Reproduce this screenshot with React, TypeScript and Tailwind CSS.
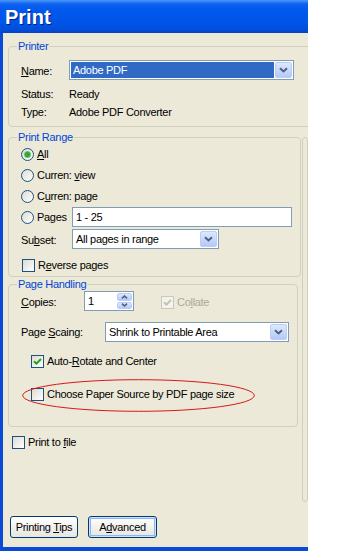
import type { ReactNode } from "react";

// XP-style "Print" dialog, cropped at the right edge like the screenshot.

function U({ children }: { children: ReactNode }) {
  return <span className="underline decoration-1 underline-offset-[1px]">{children}</span>;
}

function Group({ label, className = "", children }: { label: string; className?: string; children: ReactNode }) {
  return (
    <fieldset className={`rounded-[4px] border border-[#D0D0BF] px-[8px] ${className}`}>
      <legend className="px-[1px] leading-[13px] text-[#0046D5]">{label}</legend>
      <div className="pl-[4px]">{children}</div>
    </fieldset>
  );
}

function DropBtn() {
  return (
    <div className="flex w-[17px] items-center justify-center rounded-[2px] border border-[#BBCDF6] bg-linear-to-b from-[#DDE8FE] to-[#B5C9F6]">
      <svg width="9" height="6" viewBox="0 0 9 6">
        <path d="M1 1.2 L4.5 4.5 L8 1.2" fill="none" stroke="#4D6185" strokeWidth="2" />
      </svg>
    </div>
  );
}

function Combo({ value, w, selected = false }: { value: string; w: string; selected?: boolean }) {
  return (
    <div className={`flex h-[20px] ${w} border border-[#7F9DB9] bg-white p-[1px]`}>
      <div className={`mr-[1px] flex flex-1 items-center pl-[2px] ${selected ? "bg-[#316AC5] text-white" : ""}`}>
        {value}
      </div>
      <DropBtn />
    </div>
  );
}

function Radio({ on = false }: { on?: boolean }) {
  return (
    <span className="flex h-[13px] w-[13px] shrink-0 items-center justify-center rounded-full border border-[#1C5180] bg-linear-to-br from-[#DCDBD3] to-white">
      {on && <span className="h-[5px] w-[5px] rounded-full bg-[#2FA62F] shadow-[0_0_0_1px_#6BC56B]" />}
    </span>
  );
}

function Check({ on = false, disabled = false }: { on?: boolean; disabled?: boolean }) {
  return (
    <span
      className={`flex h-[13px] w-[13px] shrink-0 items-center justify-center border ${
        disabled ? "border-[#CAC8BB] bg-[#F4F3EE]" : "border-[#1C5180] bg-linear-to-br from-[#DCDBD3] to-white"
      }`}
    >
      {on && (
        <svg width="9" height="9" viewBox="0 0 9 9">
          <path d="M1 4.2 L3.4 6.6 L8 2" fill="none" stroke={disabled ? "#C5C2B2" : "#21A121"} strokeWidth="2" />
        </svg>
      )}
    </span>
  );
}

function Button({ children, main = false, w }: { children: ReactNode; main?: boolean; w: string }) {
  return (
    <div
      className={`flex h-[22px] ${w} items-center justify-center rounded-[3px] border border-[#003C74] bg-linear-to-b from-white to-[#E6E5DE] ${
        main ? "shadow-[inset_0_0_0_1px_#CEE0FB,inset_0_0_0_2px_#91B3EC]" : ""
      }`}
    >
      <span>{children}</span>
    </div>
  );
}

export default function App() {
  return (
    <div className="h-[551px] w-[344px] bg-white font-['Liberation_Sans',Arial,sans-serif] text-[11px] leading-[13px] tracking-[-0.3px] text-black">
      <div className="flex h-[551px] w-[308px] flex-col overflow-hidden">
        {/* title bar */}
        <div className="h-[33px] bg-[linear-gradient(180deg,#4A98FA_0%,#0E62EE_12%,#0058EE_30%,#0055E8_65%,#004FDC_90%,#0A3FBE_100%)] pl-[5px] pt-[2px]">
          <span className="text-[20px] font-bold leading-[31px] tracking-normal text-white [text-shadow:1px_1px_#0A1F80]">
            Print
          </span>
        </div>

        <div className="flex flex-1 flex-col border-b-[4px] border-l-[3px] border-[#0B4AD6] bg-[#ECE9D8] pl-[5px] pt-[7px]">
          {/* Printer */}
          <Group label="Printer" className="w-[310px] pb-[5px]">
            <div className="pt-[7px]">
              <div className="flex h-[20px] items-center">
                <span className="w-[48px] pt-[3px]">
                  <U>N</U>ame:
                </span>
                <Combo value="Adobe PDF" w="w-[225px]" selected />
              </div>
              <div className="mt-[5px] flex h-[18px] items-center">
                <span className="w-[48px]">Status:</span>
                <span>Ready</span>
              </div>
              <div className="flex h-[18px] items-center">
                <span className="w-[48px]">Type:</span>
                <span>Adobe PDF Converter</span>
              </div>
            </div>
          </Group>

          <div className="mt-[4px] flex">
            <div className="flex w-[285px] flex-col">
              {/* Print Range */}
              <Group label="Print Range" className="pb-[3px]">
                <div className="flex h-[20px] items-center gap-[3px]">
                  <Radio on />
                  <span>
                    <U>A</U>ll
                  </span>
                </div>
                <div className="flex h-[22px] items-center gap-[3px]">
                  <Radio />
                  <span>
                    Curren: <U>v</U>iew
                  </span>
                </div>
                <div className="flex h-[20px] items-center gap-[3px]">
                  <Radio />
                  <span>
                    C<U>u</U>rren: page
                  </span>
                </div>
                <div className="mt-[1px] flex h-[20px] items-center">
                  <div className="flex w-[51px] items-center gap-[3px]">
                    <Radio />
                    <span>
                      Pa<U>g</U>es
                    </span>
                  </div>
                  <div className="flex h-[20px] w-[220px] items-center border border-[#7F9DB9] bg-white pl-[3px]">
                    1 - 25
                  </div>
                </div>
                <div className="mt-[2px] flex h-[20px] items-center">
                  <span className="w-[51px] pt-[3px]">
                    Su<U>b</U>set:
                  </span>
                  <Combo value="All pages in range" w="w-[147px]" />
                </div>
                <div className="mt-[9px] flex h-[15px] items-center gap-[3px] pl-[1px]">
                  <Check />
                  <span>
                    R<U>e</U>verse pages
                  </span>
                </div>
              </Group>

              {/* Page Handling */}
              <Group label="Page Handling" className="mt-[1px] pb-[24px]">
                <div className="flex h-[20px] items-center">
                  <span className="w-[63px] pt-[2px]">
                    <U>C</U>opies:
                  </span>
                  <div className="flex h-[20px] w-[50px] border border-[#7F9DB9] bg-white p-[1px]">
                    <span className="flex flex-1 items-center pl-[2px]">1</span>
                    <div className="flex w-[15px] flex-col gap-[1px]">
                      <div className="flex flex-1 items-center justify-center rounded-[2px] border border-[#BBCDF6] bg-linear-to-b from-[#DDE8FE] to-[#B5C9F6]">
                        <svg width="7" height="4" viewBox="0 0 7 4">
                          <path d="M1 3.4 L3.5 1 L6 3.4" fill="none" stroke="#4D6185" strokeWidth="1.6" />
                        </svg>
                      </div>
                      <div className="flex flex-1 items-center justify-center rounded-[2px] border border-[#BBCDF6] bg-linear-to-b from-[#DDE8FE] to-[#B5C9F6]">
                        <svg width="7" height="4" viewBox="0 0 7 4">
                          <path d="M1 0.6 L3.5 3 L6 0.6" fill="none" stroke="#4D6185" strokeWidth="1.6" />
                        </svg>
                      </div>
                    </div>
                  </div>
                  <div className="ml-[27px] flex items-center gap-[3px] pt-[2px] text-[#ACA899]">
                    <Check on disabled />
                    <span>
                      Co<U>l</U>late
                    </span>
                  </div>
                </div>
                <div className="mt-[11px] flex h-[20px] items-center">
                  <span className="w-[84px] pt-[1px]">
                    Page <U>S</U>caing:
                  </span>
                  <Combo value="Shrink to Printable Area" w="w-[184px]" />
                </div>
                <div className="mt-[12px] ml-[10px] flex h-[15px] items-center gap-[3px]">
                  <Check on />
                  <span>
                    Auto-<U>R</U>otate and Center
                  </span>
                </div>
                <div className="relative mt-[18px] flex h-[15px] items-center gap-[3px] pl-[10px]">
                  <Check />
                  <span>Choose Paper Source by PDF page size</span>
                  <svg className="absolute left-[1px] top-[-8px]" width="233" height="33" viewBox="0 0 233 33">
                    <ellipse cx="116.5" cy="16.5" rx="115.8" ry="15.8" fill="none" stroke="#D81818" strokeWidth="1" />
                  </svg>
                </div>
              </Group>

              <div className="mt-[8px] ml-[4px] flex h-[15px] items-center gap-[3px]">
                <Check />
                <span>
                  Print to <U>f</U>ile
                </span>
              </div>
            </div>

            {/* next column, cut off by the crop */}
            <div className="mt-[6px] ml-[9px] h-[365px] w-[30px] rounded-[4px] border border-[#D0D0BF]" />
          </div>

          <div className="mt-[14px] ml-[2px] flex gap-[10px]">
            <Button w="w-[68px]">
              Printing <U>T</U>ips
            </Button>
            <Button w="w-[69px]" main>
              A<U>d</U>vanced
            </Button>
          </div>
        </div>
      </div>
    </div>
  );
}
